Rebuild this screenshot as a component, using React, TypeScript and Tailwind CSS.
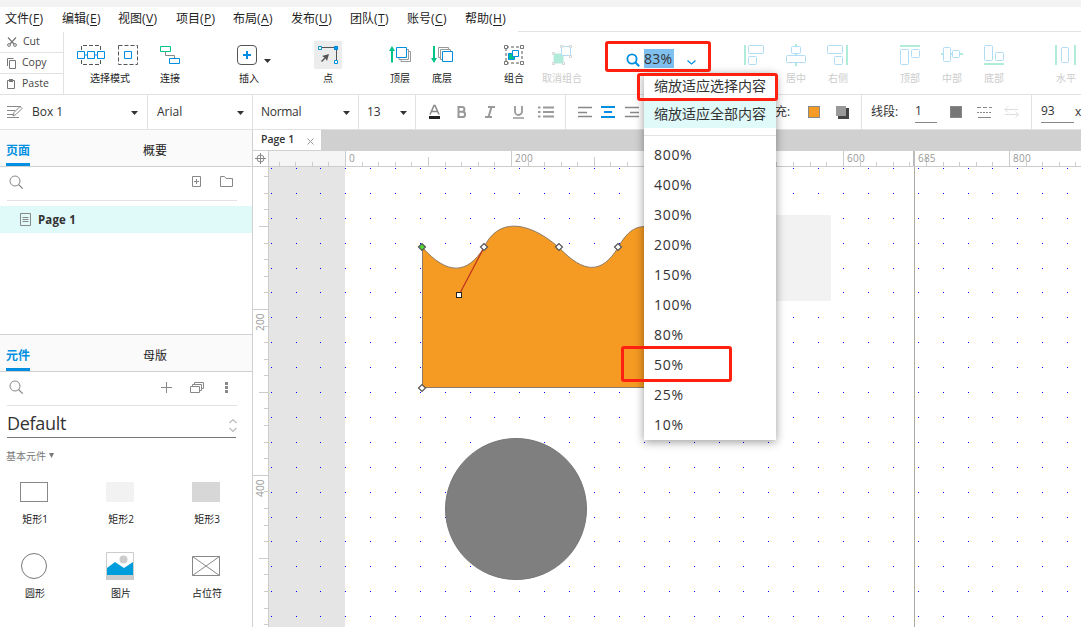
import React, { useState } from 'react';
import clsx from 'clsx';

const BLUE = '#008fe0';
const GREEN = '#00c389';

const menus = [
  { label: '文件', key: 'F', width: 'w-[57px]' },
  { label: '编辑', key: 'E', width: 'w-[56px]' },
  { label: '视图', key: 'V', width: 'w-[58px]' },
  { label: '项目', key: 'P', width: 'w-[57px]' },
  { label: '布局', key: 'A', width: 'w-[58px]' },
  { label: '发布', key: 'U', width: 'w-[59px]' },
  { label: '团队', key: 'T', width: 'w-[57px]' },
  { label: '账号', key: 'C', width: 'w-[58px]' },
  { label: '帮助', key: 'H', width: 'w-[58px]' },
];

const zoomLevels = ['800%', '400%', '300%', '200%', '150%', '100%', '80%', '50%', '25%', '10%'];

function MenuBar() {
  return (
    <div className="flex h-6 items-center pl-[5px] text-xs text-[#222]">
      {menus.map((m) => (
        <div key={m.key} className={clsx('shrink-0 whitespace-nowrap', m.width)}>
          {m.label}
          <span className="tracking-[0.4px]">
            (<span className="underline underline-offset-2">{m.key}</span>)
          </span>
        </div>
      ))}
    </div>
  );
}

interface ToolProps {
  label?: string;
  className?: string;
  disabled?: boolean;
  active?: boolean;
  children: React.ReactNode;
}

function Tool({ label, className, disabled, active, children }: ToolProps) {
  return (
    <div className={clsx('flex shrink-0 flex-col items-center', className || 'w-10')}>
      <div
        className={clsx(
          'relative flex h-7 min-w-7 items-center justify-center',
          active && 'bg-[#ececec]',
          disabled && 'opacity-30'
        )}
      >
        {children}
      </div>
      {label && (
        <span
          className={clsx(
            'mt-[2px] whitespace-nowrap text-[10px] leading-[14px]',
            disabled ? 'text-[#ccc]' : 'text-[#222]'
          )}
        >
          {label}
        </span>
      )}
    </div>
  );
}

function Caret({ className }: { className?: string }) {
  return (
    <svg width="7" height="4" viewBox="0 0 7 4" className={clsx('mt-[2px] shrink-0', className)}>
      <path d="M0 0h7L3.5 4z" fill="#333" />
    </svg>
  );
}

function Svg({ w = 20, h = 20, className, children }: { w?: number; h?: number; className?: string; children: React.ReactNode }) {
  return (
    <svg width={w} height={h} viewBox={`0 0 ${w} ${h}`} fill="none" className={clsx('shrink-0 overflow-visible', className)}>
      {children}
    </svg>
  );
}

function Clipboard() {
  return (
    <div className="flex w-16 shrink-0 flex-col border-r border-[#e2e2e2] text-[10.5px] text-[#444]">
      <div className="flex h-[21px] items-center border-b border-[#e2e2e2] pl-[7px]">
        <Svg w={10} h={10}>
          <path d="M1 .5 7 7M9 .5 3 7" stroke="#777" strokeWidth="1.2" />
          <circle cx="2" cy="8" r="1.4" stroke="#777" />
          <circle cx="8" cy="8" r="1.4" stroke="#777" />
        </Svg>
        <span className="ml-[6px]">Cut</span>
      </div>
      <div className="flex h-[21px] items-center border-b border-[#e2e2e2] pl-[7px]">
        <Svg w={9} h={11}>
          <path d="M2.5 2.5h6v8h-6z" stroke="#777" />
          <path d="M.5 8V.5h6" stroke="#777" />
        </Svg>
        <span className="ml-[6px]">Copy</span>
      </div>
      <div className="flex h-5 items-center pl-[7px]">
        <Svg w={9} h={11}>
          <path d="M.5 1.500h7v8h-7z" stroke="#777" />
          <path d="M2 0h4v3H2z" fill="#777" />
        </Svg>
        <span className="ml-[6px]">Paste</span>
      </div>
    </div>
  );
}

function Toolbar() {
  return (
    <div className="flex h-[63px] border-b border-[#e2e2e2]">
      <Clipboard />
      <div className="relative flex min-w-0 flex-1 overflow-hidden pt-[9px]">
        <Tool label="选择模式" className="w-[86px] pl-[6px]">
          <div className="mr-[6px] flex gap-[13px]">
            <Svg w={28}>
              <path d="M4.500 5V.5h19V5M4.500 15v4.500h19V15" stroke="#555" strokeDasharray="4 2" />
              <path d="M.5 6.500h7v7h-7zM10.500 6.500h7v7h-7zM20.500 6.500h7v7h-7zM7.500 10h3M17.500 10h3" stroke={BLUE} />
            </Svg>
            <Svg>
              <path d="M.5.5h19v19H.5z" stroke="#555" strokeDasharray="4 2" />
              <path d="M6.500 6.500h7v7h-7z" stroke={BLUE} />
            </Svg>
          </div>
        </Tool>
        <Tool label="连接">
          <Svg>
            <path d="M5.500 7v3.500h9V13" stroke="#888" />
            <path d="M.5 1.500h10v5H.5z" stroke={GREEN} />
            <path d="M9.500 13.500h10v5h-10z" stroke={BLUE} />
          </Svg>
        </Tool>
        <Tool label="插入" className="ml-[39px] w-10">
          <Svg className="mr-1">
            <rect x=".5" y=".5" width="19" height="19" rx="3.500" stroke="#555" />
            <path d="M10 6v8M6 10h8" stroke={BLUE} strokeWidth="2" />
          </Svg>
          <Caret className="absolute left-[29px] top-[16px]" />
        </Tool>
        <Tool label="点" active className="ml-[39px] w-10">
          <Svg>
            <path d="M3 2.500h16M18.500 3v14" stroke="#555" />
            <path d="M.5 1.500h3v3h-3zM16.500 15.500h3v3h-3z" stroke={BLUE} fill="#fff" />
            <path d="M16 1h4v4h-4z" fill={BLUE} />
            <path d="m11 9-7 2 2.500 1.500L3 16l1 1 3.500-3.500L9 16z" fill="#555" />
          </Svg>
        </Tool>
        <Tool label="顶层" className="ml-8 w-10">
          <Svg w={22} className="relative">
            <path d="M3 3v14.500" stroke={GREEN} strokeWidth="2" />
            <path d="M0 6h6L3 1z" fill={GREEN} />
            <path d="M18 4.500h1.500v10H10V13M19.500 6.500h2v10H12V15" stroke="#999" />
            <path d="M7.500 2.500h10v10h-10z" stroke={BLUE} fill="#fff" />
          </Svg>
        </Tool>
        <Tool label="底层" className="ml-[2px] w-10">
          <Svg w={22}>
            <path d="M3 1v14" stroke={GREEN} strokeWidth="2" />
            <path d="M0 13h6l-3 5z" fill={GREEN} />
            <path d="M9.500 12.500h-2v-10h10V4M11.500 14.500h-2v-10h10V6" stroke="#999" />
            <path d="M11.500 6.500h10v10h-10z" stroke={BLUE} fill="#fff" />
          </Svg>
        </Tool>
        <Tool label="组合" className="ml-8 w-10">
          <Svg>
            <path d="M2 2h16v16H2z" stroke="#555" strokeDasharray="3 2" />
            <path d="M.5.5h3v3h-3zM16.500.5h3v3h-3zM.5 16.500h3v3h-3zM16.500 16.500h3v3h-3z" fill="#fff" stroke="#777" />
            <path d="M4.500 8.500h6v6h-6z" fill={GREEN} stroke={BLUE} />
            <path d="M8.500 5.500h6v6h-6z" fill="#fff" stroke={BLUE} />
          </Svg>
        </Tool>
        <Tool label="取消组合" disabled className="ml-2 w-10">
          <Svg>
            <path d="M1.500 8.500h10v10h-10z" fill={GREEN} />
            <path d="M9.500 1.500h9v9h-9z" fill="#fff" stroke={BLUE} />
            <path d="M.5 7.500h2v2h-2zM.5 17.500h2v2h-2zM10.500 17.500h2v2h-2zM8.500.5h2v2h-2zM17.500.5h2v2h-2zM17.500 10.500h2v2h-2z" fill="#fff" stroke="#777" />
          </Svg>
        </Tool>

        <div className="ml-[43px] flex h-[38px] w-[109px] shrink-0 items-center text-sm text-[#333]">
          <Svg w={14} h={14} className="ml-px">
            <circle cx="6" cy="6" r="4.600" stroke={BLUE} strokeWidth="1.800" />
            <path d="m9.500 9.500 3.700 3.700" stroke={BLUE} strokeWidth="2" />
          </Svg>
          <span className="mb-[3px] ml-1 flex h-[19px] w-[30px] items-center bg-[#7fc0ee] leading-[17px] tracking-[0.3px]">
            83%
          </span>
          <Svg w={9} h={5} className="ml-[13px] mt-[5px]">
            <path d="m.5.5 4 3.500 4-3.500" stroke={BLUE} strokeWidth="1.200" />
          </Svg>
        </div>

        <Tool disabled>
          <Svg>
            <path d="M1 0v20" stroke={GREEN} strokeWidth="2" />
            <rect x="4.500" y=".5" width="15" height="8" rx="1" stroke={BLUE} />
            <rect x="4.500" y="11.500" width="8" height="8" rx="1" stroke={BLUE} />
          </Svg>
        </Tool>
        <Tool label="居中" disabled className="ml-[2px] w-10">
          <Svg>
            <path d="M10-1v3M10 9v2M10 18v3" stroke={GREEN} strokeWidth="2" />
            <rect x="5.500" y="1.500" width="9" height="7" rx="1" stroke={BLUE} />
            <rect x=".5" y="10.500" width="19" height="7" rx="1" stroke={BLUE} />
          </Svg>
        </Tool>
        <Tool label="右侧" disabled className="ml-[2px] w-10">
          <Svg>
            <path d="M19 0v20" stroke={GREEN} strokeWidth="2" />
            <rect x="-.5" y=".5" width="15" height="8" rx="1" stroke={BLUE} />
            <rect x="6.500" y="11.500" width="8" height="8" rx="1" stroke={BLUE} />
          </Svg>
        </Tool>
        <Tool label="顶部" disabled className="ml-8 w-10">
          <Svg>
            <path d="M0 1h20" stroke={GREEN} strokeWidth="2" />
            <rect x=".5" y="4.500" width="8" height="15" rx="1" stroke={BLUE} />
            <rect x="11.500" y="4.500" width="8" height="8" rx="1" stroke={BLUE} />
          </Svg>
        </Tool>
        <Tool label="中部" disabled className="ml-[2px] w-10">
          <Svg>
            <path d="M-1 9h3M9 9h2M18 9h3" stroke={GREEN} strokeWidth="2" />
            <rect x="1.500" y="2.500" width="7" height="14" rx="1" stroke={BLUE} />
            <rect x="10.500" y="5.500" width="7" height="7" rx="1" stroke={BLUE} />
          </Svg>
        </Tool>
        <Tool label="底部" disabled className="ml-[2px] w-10">
          <Svg>
            <path d="M0 19h20" stroke={GREEN} strokeWidth="2" />
            <rect x=".5" y=".5" width="8" height="15" rx="1" stroke={BLUE} />
            <rect x="11.500" y="7.500" width="8" height="8" rx="1" stroke={BLUE} />
          </Svg>
        </Tool>
        <Tool label="水平" disabled className="ml-8 w-10">
          <Svg>
            <path d="M0 0v20M19 0v20" stroke={GREEN} strokeWidth="2" />
            <rect x="5.500" y="2.500" width="7" height="15" rx="1" stroke={BLUE} />
          </Svg>
        </Tool>
      </div>
    </div>
  );
}

const cell = 'flex shrink-0 items-center border-r border-[#e2e2e2]';

function FormatBar() {
  return (
    <div className="flex h-[35px] overflow-hidden border-b border-[#e2e2e2] text-xs text-[#333]">
      <div className={clsx(cell, 'w-[148px] pl-[7px]')}>
        <Svg w={16} h={14}>
          <path d="M0 1.500h14M0 5.500h8M0 9.500h6M0 12.500h12" stroke="#888" />
          <path d="m6 11 1-3.500 6-6 2 2-6 6z" stroke="#888" fill="#fff" />
        </Svg>
        <span className="ml-[9px] w-[99px]">Box 1</span>
        <Caret />
      </div>
      <div className={clsx(cell, 'w-[105px] pl-[9px]')}>
        <span className="w-20">Arial</span>
        <Caret />
      </div>
      <div className={clsx(cell, 'w-[106px] pl-2')}>
        <span className="w-[82px] tracking-[-0.3px]">Normal</span>
        <Caret />
      </div>
      <div className={clsx(cell, 'w-[57px] pl-2')}>
        <span className="w-[33px]">13</span>
        <Caret />
      </div>
      <div className={clsx(cell, 'w-[150px] pl-3')}>
        <Svg w={13} h={14}>
          <path d="m2 9.500 4-9h1l4 9M3.500 6.500h6" stroke="#888" strokeWidth="1.500" />
          <path d="M1 11h11v3H1z" fill="#222" />
        </Svg>
        <Svg w={10} h={12} className="ml-[16px]">
          <path d="M1.500 1H5a2.400 2.400 0 0 1 0 4.800H1.500zm0 4.800h4a2.600 2.600 0 0 1 0 5.200h-4z" stroke="#999" strokeWidth="2" />
        </Svg>
        <Svg w={10} h={12} className="ml-[18px]">
          <path d="M3 1h7M0 11h7M6.500 1l-3 10" stroke="#999" strokeWidth="2" />
        </Svg>
        <Svg w={11} h={13} className="ml-[18px]">
          <path d="M2 0v5.500a3.500 3.500 0 0 0 7 0V0" stroke="#999" strokeWidth="1.800" />
          <path d="M0 12h11" stroke="#999" strokeWidth="1.500" />
        </Svg>
        <Svg w={16} h={12} className="ml-[14px]">
          <path d="M0 1.500h2.500M0 6h2.500M0 10.500h2.500M5 1.500h11M5 6h11M5 10.500h11" stroke="#999" strokeWidth="2" />
        </Svg>
      </div>
      <div className={clsx(cell, 'w-[296px] pl-3')}>
        <Svg w={14} h={12}>
          <path d="M0 1.500h14M0 6.500h9M0 10.500h14" stroke="#888" strokeWidth="1.500" />
        </Svg>
        <Svg w={14} h={12} className="ml-[9px]">
          <path d="M0 1h14M3 6h8M0 11h14" stroke={BLUE} strokeWidth="2" />
        </Svg>
        <Svg w={14} h={12} className="ml-[10px]">
          <path d="M0 1.500h14M5 6.500h9M0 10.500h14" stroke="#888" strokeWidth="1.500" />
        </Svg>
        <span className="ml-[136px] w-[33px]">充:</span>
        <div className="size-3 border border-[#888] bg-[#f59a23]" />
        <Svg w={13} h={13} className="ml-4">
          <path d="M2 2h11v11H2z" fill="#444" />
          <path d="M0 0h10v10H0z" fill="#999" />
        </Svg>
      </div>
      <div className={clsx(cell, 'w-[170px] pl-[9px]')}>
        <span className="w-11">线段:</span>
        <div className="mt-[2px] h-5 w-[22px] border-b border-[#888] leading-4">1</div>
        <div className="ml-[13px] size-3 border border-[#888] bg-[#777]" />
        <Svg w={15} h={12} className="ml-[15px]">
          <path d="M0 1.500h15" stroke="#888" strokeDasharray="4 2" />
          <path d="M0 6.500h15" stroke="#888" strokeDasharray="2 1" />
          <path d="M1 11.500h13" stroke="#888" />
        </Svg>
        <Svg w={14} h={12} className="ml-[13px]">
          <path d="M0 3.500h13M3 .5l-3 3 3 3M0 8.500h13M10.500 5.500l3 3-3 3" stroke="#ddd" />
        </Svg>
      </div>
      <div className="flex shrink-0 items-center pl-[9px]">
        <div className="mt-[2px] h-5 w-[33px] border-b border-[#888] leading-4">93</div>
        <span className="ml-px">x</span>
      </div>
    </div>
  );
}

function PanelTabs({ first, second }: { first: string; second: string }) {
  return (
    <div className="flex h-[37px] shrink-0 border-b border-[#d0d0d0] bg-[#fafafa] pl-[6px] text-xs leading-[42px] text-[#222]">
      <div className="h-9 w-6 border-b-[3px] border-[#008fe0] font-bold text-[#008fe0]">{first}</div>
      <div className="ml-[113px]">{second}</div>
    </div>
  );
}

function SearchIcon() {
  return (
    <Svg w={14} h={14}>
      <circle cx="6" cy="6" r="5" stroke="#888" />
      <path d="m9.500 9.500 4.200 4.200" stroke="#888" strokeWidth="1.200" />
    </Svg>
  );
}

function Widget({ label, children }: { label: string; children: React.ReactNode }) {
  return (
    <div className="flex w-[50px] flex-col items-center">
      <div className="flex h-7 items-center">{children}</div>
      <span className="mt-[6px] whitespace-nowrap pl-[2px] text-[10px] leading-[14px] text-[#222]">{label}</span>
    </div>
  );
}

function Sidebar() {
  return (
    <div className="flex w-[253px] shrink-0 flex-col border-r border-[#d0d0d0]">
      <PanelTabs first="页面" second="概要" />
      <div className="ml-[7px] flex h-[34px] w-[230px] items-center border-b border-[#e2e2e2] pb-[3px] pl-[2px]">
        <SearchIcon />
        <Svg w={10} h={12} className="ml-[169px]">
          <path d="M.5.5h8v10h-8zM4.500 3v5M2 5.500h5" stroke="#888" />
        </Svg>
        <Svg w={14} h={12} className="ml-[18px]">
          <path d="M.5.5h4l1.500 2h6.500v8H.5z" stroke="#888" />
        </Svg>
      </div>
      <div className="mt-[5px] flex h-[27px] items-center bg-[#e0fafa] pl-5">
        <Svg w={11} h={13}>
          <path d="M.5.5h10v12H.5zM2.500 4.500h6M2.500 6.500h6M2.500 8.500h6" stroke="#888" />
        </Svg>
        <span className="ml-[7px] text-[11.5px] font-bold tracking-[0.15px] text-[#333]">Page 1</span>
      </div>
      <div className="h-[102px] border-b border-[#d0d0d0]" />

      <PanelTabs first="元件" second="母版" />
      <div className="ml-[7px] flex h-[34px] w-[230px] items-center border-b border-[#e2e2e2] pb-[3px] pl-[2px]">
        <SearchIcon />
        <Svg w={11} h={11} className="ml-[138px]">
          <path d="M5.500 0v11M0 5.500h11" stroke="#888" />
        </Svg>
        <Svg w={14} h={11} className="ml-[18px]">
          <path d="M.5 4.500h9v6h-9zM2.500 4V2.500h9v6H10M4.500 2V.5h9v6H12" stroke="#888" />
        </Svg>
        <Svg w={3} h={11} className="ml-[21px]">
          <path d="M0 0h3v3H0zM0 4h3v3H0zM0 8h3v3H0z" fill="#888" />
        </Svg>
      </div>
      <div className="ml-[7px] flex h-8 w-[229px] items-center justify-between border-b border-[#777] text-[18px] text-[#333]">
        <span className="mt-[3px] tracking-[-0.3px]">Default</span>
        <Svg w={8} h={13} className="mr-[-1px] mt-2">
          <path d="m.5 4 3.500-3.500L7.500 4M.5 9 4 12.500 7.500 9" stroke="#bbb" strokeWidth="1.200" />
        </Svg>
      </div>
      <div className="flex h-[40px] items-center pb-[3px] pl-[6px] text-[10px] text-[#777]">
        <span>基本元件</span>
        <Svg w={5} h={5} className="mb-[2px] ml-[3px]">
          <path d="M0 0h5L2.500 5z" fill="#777" />
        </Svg>
      </div>
      <div className="flex gap-9 pl-[9px]">
        <Widget label="矩形1">
          <div className="h-5 w-7 border border-[#888]" />
        </Widget>
        <Widget label="矩形2">
          <div className="h-5 w-7 bg-[#f2f2f2]" />
        </Widget>
        <Widget label="矩形3">
          <div className="h-5 w-7 bg-[#d7d7d7]" />
        </Widget>
      </div>
      <div className="mt-[26px] flex gap-9 pl-[9px]">
        <Widget label="圆形">
          <div className="size-[26px] rounded-full border border-[#777]" />
        </Widget>
        <Widget label="图片">
          <Svg w={28} h={28}>
            <path d="M.5.5h27v27H.5z" stroke="#ccc" />
            <path d="M0 23h28v5H0z" fill="#ccc" />
            <circle cx="17.500" cy="7.500" r="4" fill="#ccc" />
            <path d="M1 16l8-6 9 6 9-6v13H1z" fill="#009ddc" />
          </Svg>
        </Widget>
        <Widget label="占位符">
          <Svg w={28}>
            <path d="M.5.5h27v19H.5zM.5.5l27 19M27.500.5l-27 19" stroke="#888" />
          </Svg>
        </Widget>
      </div>
    </div>
  );
}

// screen pixels per page unit at the current zoom
const SCALE = 0.83;
const ORIGIN_X = 345;
const ORIGIN_Y = 143;

function ticks(origin: number, from: number, to: number) {
  const out: { pos: number; unit: number }[] = [];
  for (let unit = -100; unit <= 900; unit += 20) {
    const pos = Math.floor(origin + unit * SCALE + 0.4);
    if (pos > from && pos < to) out.push({ pos, unit });
  }
  return out;
}

function tickSize(unit: number) {
  if (unit % 200 === 0) return 15;
  if (unit % 100 === 0) return 9;
  return 4;
}

function HorizontalRuler() {
  return (
    <svg width="812" height="15" viewBox="269 151 812 15" className="shrink-0">
      <rect x="269" y="151" width="76" height="15" fill="#f5f5f5" />
      {ticks(ORIGIN_X, 269, 1081).map(({ pos, unit }) => (
        <g key={unit}>
          <rect x={pos} y={166 - tickSize(unit)} width="1" height={tickSize(unit)} fill="#ccc" />
          {/* the 400 mark lies under the zoom menu */}
          {unit % 200 === 0 && unit !== 400 && (
            <text x={pos + 4} y="162" fontSize="10" letterSpacing="0.3" fill="#999">{unit}</text>
          )}
        </g>
      ))}
      <rect x="913" y="151" width="2" height="15" fill="#bbb" />
      <text x="918" y="162" fontSize="10" letterSpacing="0.2" fill="#999">685</text>
    </svg>
  );
}

function VerticalRuler() {
  return (
    <svg width="15" height="460" viewBox="253 167 15 460" className="shrink-0">
      {ticks(ORIGIN_Y, 167, 627).map(({ pos, unit }) => (
        <g key={unit}>
          <rect x={268 - tickSize(unit)} y={pos} width={tickSize(unit)} height="1" fill="#ccc" />
          {unit % 200 === 0 && (
            <text transform={`translate(264 ${pos + 22}) rotate(-90)`} fontSize="10" letterSpacing="0.2" fill="#999">{unit}</text>
          )}
        </g>
      ))}
    </svg>
  );
}

const dotColumns = [271, 296, 320];
for (let k = 0; k < 30; k++) dotColumns.push(Math.round(ORIGIN_X + k * 24.9));
const dotRows: number[] = [];
for (let k = 1; k < 20; k++) dotRows.push(Math.round(ORIGIN_Y + k * 24.9));

function Node({ x, y, fill = '#fff' }: { x: number; y: number; fill?: string }) {
  return (
    <path
      d={`M${x - 3.5} ${y}l3.500-3.500 3.500 3.500-3.500 3.500z`}
      fill={fill}
      stroke="#555"
      strokeWidth="1.200"
    />
  );
}

function Canvas() {
  return (
    <svg width="812" height="460" viewBox="269 167 812 460" className="shrink-0">
      <rect x="269" y="167" width="76" height="460" fill="#e5e5e5" />
      {dotRows.map((y) =>
        dotColumns.map((x) => <rect key={`${x}-${y}`} x={x} y={y} width="1" height="1" fill="#0000ff" />)
      )}
      <rect x="914" y="167" width="1" height="460" fill="#aaa" />
      <rect x="690" y="215" width="141" height="86" fill="#f2f2f2" />
      <path
        d="M422.500 247.500C447 275 467 275 484 247.500C497 219 526 219 559 247.500C584 274 602 274 618 247.500C628 230 636 226.500 646 226.500H690V387.500H422.500Z"
        fill="#f59a23"
        stroke="#8c7b66"
      />
      <circle cx="516" cy="509" r="70.500" fill="#7f7f7f" stroke="#777" />
      <path d="M484 247.500 459 295" stroke="#c0311e" strokeWidth="1.200" />
      <rect x="456.500" y="292.500" width="5" height="5" fill="#fff" stroke="#222" />
      <Node x={422} y={247} fill="#52d832" />
      <Node x={484} y={247} />
      <Node x={559} y={247} />
      <Node x={618} y={247} />
      <Node x={422} y={388} />
    </svg>
  );
}

function Workspace() {
  return (
    <div className="flex min-w-0 flex-1 flex-col">
      <div className="flex h-[21px] shrink-0 border-b border-[#d0d0d0] bg-[#d0d0d0]">
        <div className="flex w-[68px] items-center bg-white pl-2 text-[10.5px] font-semibold text-[#333]">
          <span className="w-[46px]">Page 1</span>
          <Svg w={7} h={7} className="mt-[2px]">
            <path d="m.5.5 6 6M6.500.5l-6 6" stroke="#999" />
          </Svg>
        </div>
      </div>
      <div className="flex h-4 shrink-0 border-b border-[#ccc]">
        <div className="flex w-4 shrink-0 items-center justify-center border-r border-[#ccc]">
          <Svg w={11} h={11}>
            <circle cx="5.500" cy="5.500" r="3.500" stroke="#888" />
            <path d="M5.500 0v11M0 5.500h11" stroke="#888" />
          </Svg>
        </div>
        <HorizontalRuler />
      </div>
      <div className="flex min-h-0 flex-1">
        <div className="w-4 shrink-0 border-r border-[#ccc]">
          <VerticalRuler />
        </div>
        <Canvas />
      </div>
    </div>
  );
}

function ZoomMenu({ onSelect }: { onSelect: (level: string) => void }) {
  return (
    <div className="absolute left-[644px] top-[73px] h-[367px] w-[132px] bg-white text-sm text-[#333] shadow-[0_2px_9px_rgba(0,0,0,0.4)]">
      <div className="flex h-7 items-center whitespace-nowrap pb-[2px] pl-[10px]">缩放适应选择内容</div>
      <div className="flex h-[27px] items-center whitespace-nowrap bg-[#e0fafa] pb-[2px] pl-[10px]">缩放适应全部内容</div>
      <div className="mb-1 mt-[7px] h-px bg-[#e2e2e2]" />
      {zoomLevels.map((level) => (
        <div key={level} onClick={() => onSelect(level)} className="flex h-[30px] items-center pl-[10px] tracking-[0.7px]">
          {level}
        </div>
      ))}
    </div>
  );
}

export default function App() {
  const [, setZoom] = useState('83%');

  return (
    <div className="relative flex h-[627px] w-[1081px] flex-col overflow-hidden bg-white font-['Open_Sans','Noto_Sans_CJK_SC',sans-serif]">
      <div className="h-[7px] shrink-0 bg-[#f3f3f3]" />
      <MenuBar />
      <div className="flex h-px justify-end">
        <div className="w-[563px] bg-[#e2e2e2]" />
      </div>
      <Toolbar />
      <FormatBar />
      <div className="flex min-h-0 flex-1">
        <Sidebar />
        <Workspace />
      </div>

      <ZoomMenu onSelect={setZoom} />

      {/* Callouts */}
      <div className="pointer-events-none absolute left-[605px] top-[41px] h-[31px] w-[106px] rounded-[3px] border-[3px] border-[#ff2010]" />
      <div className="pointer-events-none absolute left-[637px] top-[73px] h-[28px] w-[141px] rounded-[3px] border-[3px] border-[#ff2010]" />
      <div className="pointer-events-none absolute left-[621px] top-[346px] h-[36px] w-[111px] rounded-[3px] border-[3px] border-[#ff2010]" />
    </div>
  );
}
